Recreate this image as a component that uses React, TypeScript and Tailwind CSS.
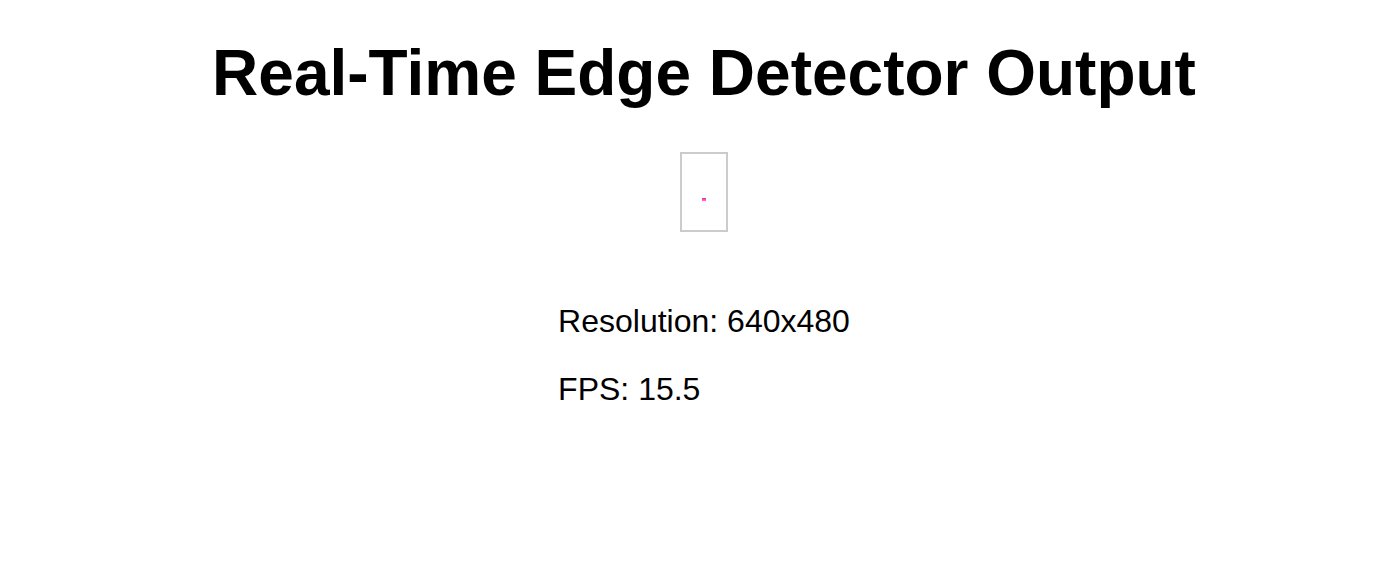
import React from "react";

const stats = [
  { label: "Resolution", value: "640x480" },
  { label: "FPS", value: "15.5" },
];

const App: React.FC = () => {
  return (
    <div className="min-h-[588px] bg-white pl-[34px] text-black font-['Liberation_Sans',Arial,sans-serif]">
      {/* Heading */}
      <h1 className="pt-[41px] text-center text-[64px] font-bold leading-none">
        Real-Time Edge Detector Output
      </h1>

      {/* Frame preview */}
      <div className="mt-[47px] flex justify-center">
        <div className="flex h-[80px] w-[48px] items-center justify-center border-2 border-[#cccccc] bg-white">
          <div className="mt-[15px] h-[3px] w-[4px] bg-gradient-to-b from-[#ff1a4a] to-[#ff66ff]" />
        </div>
      </div>

      {/* Stats */}
      <div className="mt-[73px] flex justify-center">
        <div className="flex flex-col gap-[36px] text-left">
          {stats.map((s) => (
            <p key={s.label} className="text-[32px] leading-none">
              {s.label}: {s.value}
            </p>
          ))}
        </div>
      </div>
    </div>
  );
};

export default App;
